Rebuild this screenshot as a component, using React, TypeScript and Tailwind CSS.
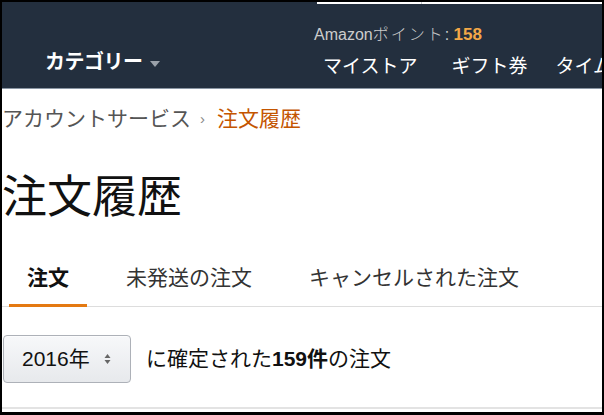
const jp = "font-['Liberation_Sans','Noto_Sans_CJK_JP',sans-serif]";

function SortArrows() {
  return (
    <svg width="7" height="12" viewBox="0 0 7 12" className="ml-[14px]">
      <path d="M3.5 1 L6.5 5 L0.5 5 Z" fill="#666" />
      <path d="M3.5 11 L6.5 7 L0.5 7 Z" fill="#666" />
    </svg>
  );
}

export default function App() {
  return (
    <div className={`w-[604px] h-[415px] bg-black pt-[2px] pl-[2px] overflow-hidden ${jp}`}>
      <div className="w-[600px] h-[410px] bg-white flex flex-col overflow-hidden relative">
        {/* header */}
        <div className="h-[86px] bg-[#232f3e] flex relative shrink-0 overflow-hidden">
          <div className="absolute top-0 left-[315px] w-[285px] h-[2px] bg-white flex">
            <div className="w-[104px] h-[2px]" />
            <div className="w-[1px] h-[2px] bg-[#c8ccd1]" />
          </div>
          <div className="w-[312px] shrink-0 pl-[43px] pt-[48px]">
            <div className="flex items-center leading-[24px] text-[20px] font-bold text-white tracking-[-0.5px]">
              カテゴリー
              <svg width="10" height="6" viewBox="0 0 10 6" className="ml-[7px] mt-[3px]">
                <path d="M0 0 L10 0 L5 6 Z" fill="#9aa1aa" />
              </svg>
            </div>
          </div>
          <div className="pt-[23px] flex flex-col shrink-0">
            <div className="leading-[20px] text-[16px] text-[#ccc] whitespace-nowrap">
              Amazon<span className="font-light tracking-[2px]">ポイント</span>: <span className="text-[17px] text-[#f3a847] font-bold">158</span>
            </div>
            <div className="mt-[10px] flex leading-[24px] text-[19px] text-white whitespace-nowrap pl-[9px]">
              <span className="mr-[34px]">マイストア</span>
              <span className="mr-[28px]">ギフト券</span>
              <span>タイム</span>
            </div>
          </div>
        </div>
        <div className="h-[1px] bg-[#8a96a3] shrink-0" />

        {/* breadcrumb */}
        <div className="mt-[17px] flex items-center leading-[26px] text-[21px] text-[#555] whitespace-nowrap">
          <span>アカウントサービス</span>
          <span className="ml-[9px] mr-[12px] text-[15px] text-[#888]">›</span>
          <span className="text-[#c45500]">注文履歴</span>
        </div>

        {/* heading */}
        <h1 className="mt-[39px] leading-[54px] text-[45px] text-[#111] font-normal whitespace-nowrap">
          注文履歴
        </h1>

        {/* tabs */}
        <div className="mt-[39px] border-b border-[#ddd] flex gap-[21px] pl-[7px] text-[21px] leading-[28px] whitespace-nowrap">
          <div className="px-[18px] pb-[12px] border-b-[3px] border-[#e47911] -mb-[1px] font-bold text-[#111]">注文</div>
          <div className="px-[18px] pb-[12px] text-[#333]">未発送の注文</div>
          <div className="px-[18px] pb-[12px] text-[#333]">キャンセルされた注文</div>
        </div>

        {/* filter */}
        <div className="mt-[28px] flex items-center whitespace-nowrap">
          <div className="ml-[1px] w-[128px] h-[48px] rounded-[4px] border border-[#adb1b8] bg-gradient-to-b from-[#f7f8fa] to-[#e7e9ec] shadow-[0_1px_0_rgba(255,255,255,0.6)_inset] flex items-center pl-[18px] text-[21px] text-[#111]">
            2016年
            <SortArrows />
          </div>
          <div className="ml-[15px] text-[21px] text-[#111]">
            に確定された<span className="font-bold">159件</span>の注文
          </div>
        </div>

        <div className="absolute left-0 right-0 top-[405px] h-[2px] bg-[#e3e3e3]" />
      </div>
    </div>
  );
}
